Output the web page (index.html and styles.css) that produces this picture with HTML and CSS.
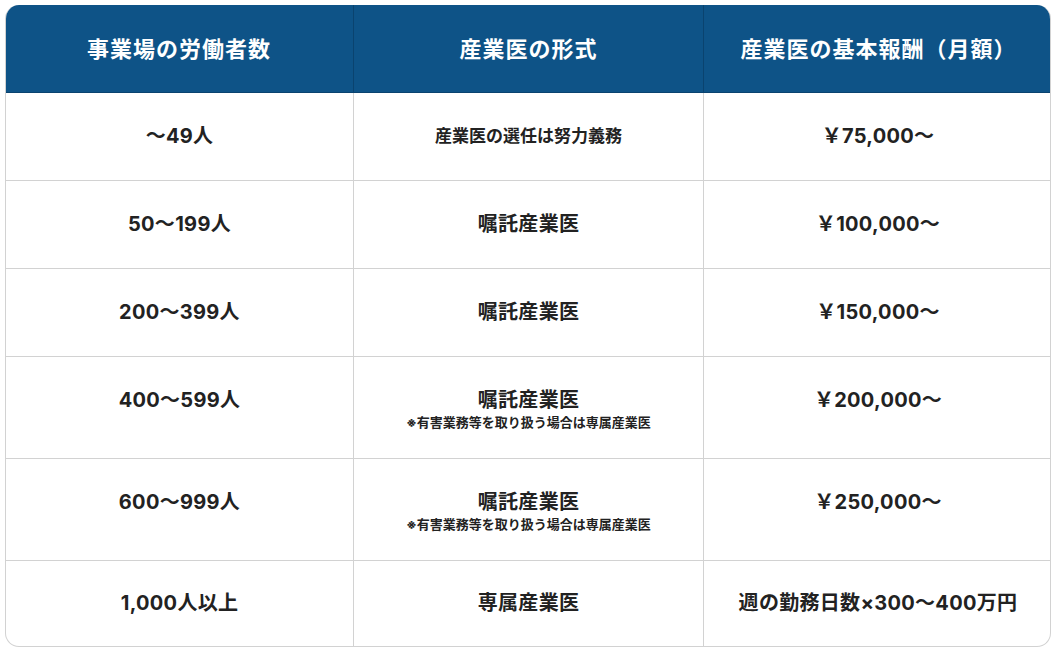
FILE: index.html
```html
<!DOCTYPE html>
<html lang="ja">
<head>
<meta charset="utf-8">
<link rel="stylesheet" href="styles.css">
</head>
<body>
<div class="table">
  <div class="head">事業場の労働者数</div>
  <div class="head">産業医の形式</div>
  <div class="head">産業医の基本報酬（月額）</div>

  <div class="cell">〜49人</div>
  <div class="cell"><span class="small">産業医の選任は努力義務</span></div>
  <div class="cell">￥75,000〜</div>

  <div class="cell">50〜199人</div>
  <div class="cell">嘱託産業医</div>
  <div class="cell">￥100,000〜</div>

  <div class="cell">200〜399人</div>
  <div class="cell">嘱託産業医</div>
  <div class="cell">￥150,000〜</div>

  <div class="cell">400〜599人</div>
  <div class="cell">嘱託産業医<span class="note">※有害業務等を取り扱う場合は専属産業医</span></div>
  <div class="cell">￥200,000〜</div>

  <div class="cell">600〜999人</div>
  <div class="cell">嘱託産業医<span class="note">※有害業務等を取り扱う場合は専属産業医</span></div>
  <div class="cell">￥250,000〜</div>

  <div class="cell">1,000人以上</div>
  <div class="cell">専属産業医</div>
  <div class="cell">週の勤務日数×300〜400万円</div>
</div>
</body>
</html>
```

FILE: styles.css
```css
html, body {
  margin: 0;
  padding: 0;
  background: #ffffff;
}
body {
  padding: 5px 5px 0 5px;
  font-family: "Inter", "Noto Sans CJK JP", sans-serif;
  color: #222222;
}
.table {
  width: 1046px;
  display: grid;
  grid-template-columns: 347px 350px 349px;
  border-radius: 14px;
  overflow: hidden;
  border-left: 1px solid #d2d2d2;
  border-right: 1px solid #d2d2d2;
  border-bottom: 1px solid #d2d2d2;
  box-sizing: border-box;
}
.head {
  background: #0e5387;
  color: #ffffff;
  font-weight: 700;
  font-size: 22px;
  line-height: 30px;
  height: 88px;
  box-sizing: border-box;
  display: flex;
  align-items: center;
  justify-content: center;
  border-left: 1px solid #0a436f;
  border-bottom: 1px solid #0a436f;
  letter-spacing: 1px;
}
.head:first-child {
  border-left: none;
  margin-left: -1px;
}
.head:nth-child(3) {
  margin-right: -1px;
}
.cell {
  font-weight: 700;
  font-size: 20px;
  line-height: 30px;
  letter-spacing: 0.3px;
  padding: 28px 0 29px;
  text-align: center;
  display: flex;
  flex-direction: column;
  align-items: center;
  border-left: 1px solid #d2d2d2;
  border-bottom: 1px solid #d2d2d2;
}
.cell:nth-child(3n+1) {
  border-left: none;
}
.cell:nth-last-child(-n+3) {
  border-bottom: none;
  padding-bottom: 28px;
  padding-top: 27px;
}
.small {
  font-size: 17px;
  letter-spacing: 0;
}
.note {
  font-size: 13px;
  line-height: 14px;
  letter-spacing: 0;
}
```
